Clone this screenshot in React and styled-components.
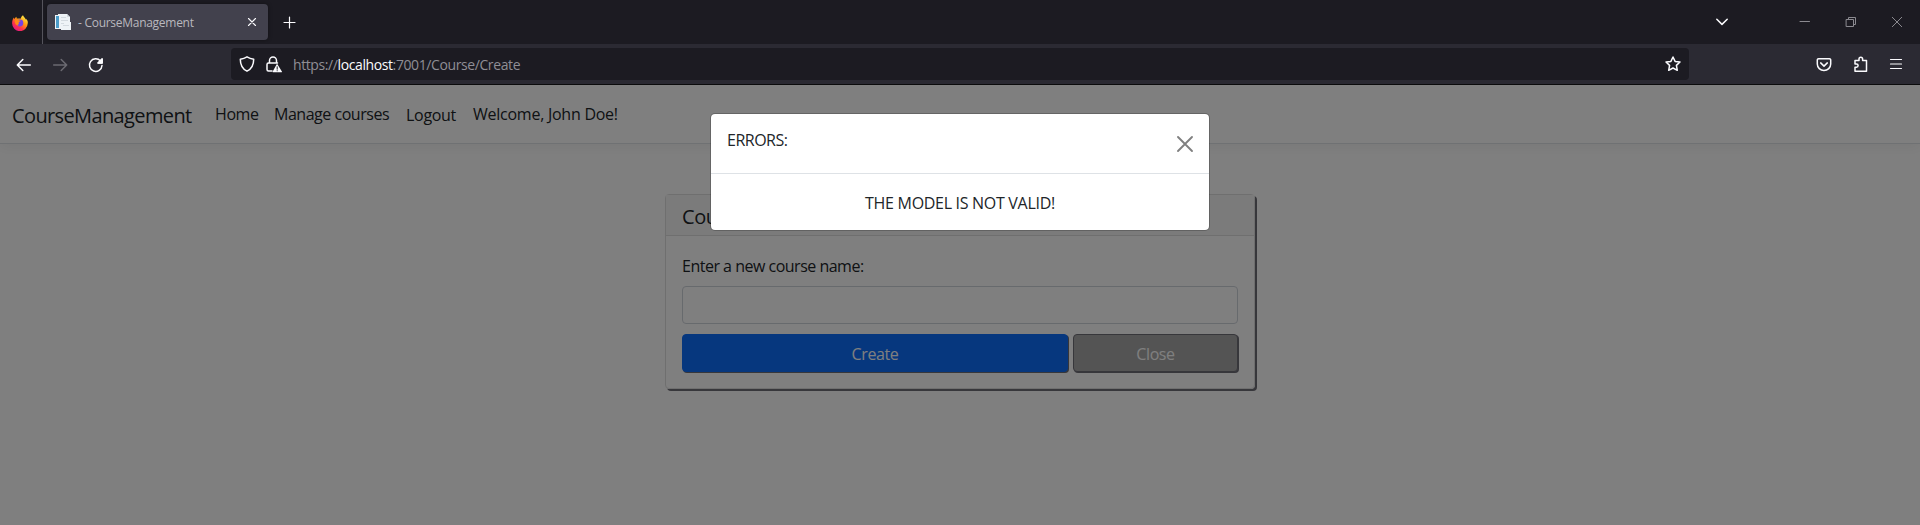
import React from "react";
import styled, { createGlobalStyle } from "styled-components";

const Global = createGlobalStyle`
  * { box-sizing: border-box; }
  body { margin: 0; background: #fff; font-family: "Open Sans", "Noto Sans", sans-serif; overflow: hidden; }
  button { font: inherit; padding: 0; border: 0; background: none; cursor: pointer; }
`;

const Window = styled.div`
  display: flex; flex-direction: column; width: 100%; height: 525px; background: #fff;
`;

const TabStrip = styled.div`
  flex: none; height: 44px; display: flex; align-items: center; background: #1c1b22; color: #fbfbfe;
`;
const FirefoxView = styled.div`
  width: 43px; height: 44px; padding: 14px 0 0 12px; border-right: 1px solid #55545c;
`;
const Tab = styled.div`
  width: 221px; height: 36px; margin-left: 4px; padding: 0 10px 0 8px;
  display: flex; align-items: center; border-radius: 4px; background: #42414d;
  box-shadow: 0 0 4px rgba(0, 0, 0, 0.4);
`;
const TabTitle = styled.span`
  flex: 1; margin: 1px 0 0 7px; font-size: 12px; letter-spacing: -0.28px; color: #b9b8be; white-space: pre;
`;
const Icon = styled.svg`
  display: block; flex: none; fill: none; stroke: ${(p) => p.$color || "#fbfbfe"};
  stroke-width: ${(p) => p.$weight || 1.5}; stroke-linecap: round; stroke-linejoin: round;
  margin-left: ${(p) => p.$gap || 0}px; overflow: visible;
`;
const WindowControls = styled.div`
  margin-left: auto; padding-right: 18px; display: flex; align-items: center;
`;

const Toolbar = styled.div`
  flex: none; height: 41px; padding: 0 15px 0 16px; display: flex; align-items: center;
  background: #2b2a33; border-bottom: 1px solid #0c0c0d;
`;
const Navigation = styled.div`
  display: flex; padding-top: 1px;
`;
const UrlBar = styled.div`
  width: 1458px; height: 32px; margin-left: 127px; padding: 0 8px; display: flex; align-items: center;
  border-radius: 4px; background: #1c1b22;
`;
const Url = styled.span`
  flex: 1; margin-left: 11px; padding-top: 2px; font-size: 14px; line-height: 20px; letter-spacing: -0.4px; color: #8f8e95;
  b { font-weight: 400; color: #fbfbfe; }
`;

const Page = styled.main`
  position: relative; flex: 1; color: #212529; font-size: 16px; line-height: 24px;
`;
const Navbar = styled.nav`
  height: 59px; padding: 8px 12px 0; display: flex; align-items: flex-start; background: #fff;
  border-bottom: 1px solid #dee2e6; box-shadow: 0 4px 12px rgba(0, 0, 0, 0.05);
`;
const Brand = styled.a`
  width: 203px; padding-top: 8px; font-size: 20px; line-height: 30px; letter-spacing: ${(p) => p.$track}px; white-space: nowrap;
`;
const NavItem = styled.a`
  width: ${(p) => p.$width}px; padding-top: ${(p) => p.$top || 9}px; letter-spacing: ${(p) => p.$track}px; white-space: nowrap;
`;

const Card = styled.section`
  width: 590px; height: 195px; margin: 50px 0 0 665px; border: 1px solid #dfdfdf; border-radius: 4px;
  box-shadow: 2px 2px #6f6e77;
`;
const CardHeader = styled.header`
  height: 41px; padding: 10px 16px 0; background: #f7f7f7; border-bottom: 1px solid #dfdfdf;
  font-size: 20px; letter-spacing: -0.4px;
`;
const CardBody = styled.form`
  padding: 18px 16px 0; display: flex; flex-direction: column;
`;
const Label = styled.label`
  letter-spacing: ${(p) => p.$track}px;
`;
const Field = styled.input`
  width: 100%; height: 38px; margin: 8px 0 10px; border: 1px solid #ced4da; border-radius: 4px; background: #fff;
`;
const Actions = styled.div`
  display: flex; gap: 5px;
`;
const Action = styled.button`
  && {
    width: ${(p) => p.$width}px; height: 38px; padding-top: 2px; border-radius: 4px; color: #fff; letter-spacing: -0.4px;
    background: ${(p) => p.$fill}; border: 1px solid ${(p) => p.$edge}; box-shadow: 1px 1px #6f6e77;
  }
`;

const Backdrop = styled.div`
  position: absolute; inset: 0; background: rgba(0, 0, 0, 0.5);
`;
const Dialog = styled.div`
  width: 500px; height: 118px; margin: 28px auto 0; background: #fff; background-clip: padding-box;
  border: 1px solid rgba(0, 0, 0, 0.2); border-radius: 5px;
`;
const DialogHeader = styled.header`
  height: 60px; padding: 14px 16px 0; display: flex; justify-content: space-between; border-bottom: 1px solid #dee2e6;
  letter-spacing: ${(p) => p.$track}px;
`;
const DialogClose = styled.button`
  width: 16px; height: 16px; margin-top: 8px;
`;
const DialogBody = styled.div`
  padding-top: 17px; text-align: center; letter-spacing: ${(p) => p.$track}px;
`;

function FirefoxLogo() {
  return (
    <svg width="16" height="16" viewBox="0 0 16 16">
      <defs>
        <linearGradient id="flame" x1="0.85" y1="0.05" x2="0.2" y2="0.95">
          <stop offset="0" stopColor="#fff44f" />
          <stop offset="0.4" stopColor="#ff980e" />
          <stop offset="0.7" stopColor="#ff3647" />
          <stop offset="1" stopColor="#e31587" />
        </linearGradient>
      </defs>
      <path fill="url(#flame)" d="M15.6 6c-.4-1-1.2-1.900-1.700-2.200.2.600.400 1.100.400 1.500C13.500 3.300 12 2.300 11 .2c-1.400.8-2 2-2.100 3.200L4.800 3.500C4.500 3 4.500 2.200 4.500 1.700c-.900.500-1.700 1.400-2.200 2.200-.4-.1-.3-1-.3-1.500C.8 3.700.1 5.700.1 8.200a7.800 7.800 0 0 0 15.600.3c.2-1 .100-1.800-.1-2.500z" />
      <circle cx="7.900" cy="8" r="3.400" fill="#7542e5" />
      <path fill="#ff8a16" d="M2.900 4.700c1.500-.7 3-.5 3.800.6l2 .4c-.1.800-1.300 1-1.800 1.300-.4.600-.2 1.200.400 1.500-1.100.3-1.600 1.200-.6 2.100-2.500.1-4.300-2-3.800-5.900z" />
    </svg>
  );
}

function PageIcon() {
  return (
    <svg width="16" height="16" viewBox="0 0 16 16">
      <path fill="#eef3f7" d="M0 1h3V0h9l3 3v5h1v8H6v-1H0z" />
      <path fill="#4b9cc9" d="M1 2h3v12H1z" />
      <path fill="#d3dae0" d="M6 3h5v1H6zM6 6h7v1H6zM6 9h3v1H6zM8 11h6v1H8zM12 0l3 3h-3z" />
    </svg>
  );
}

export default function App() {
  return (
    <Window>
      <Global />
      <TabStrip>
        <FirefoxView><FirefoxLogo /></FirefoxView>
        <Tab>
          <PageIcon />
          <TabTitle>- CourseManagement</TabTitle>
          <Icon width="12" height="12" viewBox="0 0 12 12" $weight={1.1}><path d="M2.500 2.500l7 7M9.500 2.500l-7 7" /></Icon>
        </Tab>
        <Icon width="12" height="12" viewBox="0 0 12 12" $gap={16} $weight={1.2}><path d="M5.500 1v11M0 6.500h11" /></Icon>
        <WindowControls>
          <Icon width="12" height="8" viewBox="0 0 12 8"><path d="M.8 1.200L6 6.400l5.200-5.200" /></Icon>
          <Icon width="10" height="10" viewBox="0 0 10 10" $gap={72} $weight={1} $color="#8b8a90"><path d="M0 4.500h9.500" /></Icon>
          <Icon width="10" height="10" viewBox="0 0 10 10" $gap={36} $weight={1} $color="#8b8a90"><path d="M.5 2.500h7v7h-7zM2.500 2.500v-2h7v7h-2" /></Icon>
          <Icon width="10" height="10" viewBox="0 0 10 10" $gap={36} $weight={1} $color="#8b8a90"><path d="M.3.300l9.400 9.400M9.700.300L.3 9.700" /></Icon>
        </WindowControls>
      </TabStrip>
      <Toolbar>
        <Navigation>
          <Icon width="16" height="16" viewBox="0 0 16 16"><path d="M14.300 8H1.500M6.800 2.500L1.300 8l5.500 5.500" /></Icon>
          <Icon width="16" height="16" viewBox="0 0 16 16" $gap={20} $color="#6b6a72"><path d="M1.700 8h12.800M9.200 2.500L14.700 8l-5.500 5.500" /></Icon>
          <Icon width="16" height="16" viewBox="0 0 16 16" $gap={20}><path d="M14 8.500A6.300 6.300 0 1 1 12.500 4M14.200 2v4h-4z" /><path fill="#fbfbfe" d="M14 2v4h-4z" /></Icon>
        </Navigation>
        <UrlBar>
          <Icon width="16" height="16" viewBox="0 0 16 16"><path d="M8 .800C6 2 3.700 2.800 1.300 3.200 1.300 9 3 12.700 8 15.200c5-2.500 6.700-6.200 6.700-12C12.300 2.800 10 2 8 .800z" /></Icon>
          <Icon width="16" height="16" viewBox="0 0 16 16" $gap={11}>
            <path d="M3.500 7V4.500a3.500 3.500 0 0 1 7 0V7M6 15H2.500A1.500 1.500 0 0 1 1 13.500v-5A1.500 1.500 0 0 1 2.500 7h9" />
            <path stroke="none" fill="#fbfbfe" d="M11.400 8.200l4.500 7.200c.3.500 0 .8-.5.800H7.200c-.5 0-.8-.4-.5-.8l4-7.200q.4-.5.700 0z" />
            <path stroke="#1c1b22" strokeWidth="1" d="M11.200 10.800v2.400M11.200 14.700v.1" />
          </Icon>
          <Url>https://<b>localhost</b>:7001/Course/Create</Url>
          <Icon width="16" height="16" viewBox="0 0 16 16"><path d="M8 1l2.100 4.400 4.900.6-3.600 3.400.900 4.900L8 12l-4.300 2.300.9-4.900L1 6l4.900-.6z" /></Icon>
        </UrlBar>
        <Icon width="16" height="16" viewBox="0 0 16 16" $gap={127}><path d="M2.500 2.700h11a1.200 1.200 0 0 1 1.200 1.200V8a6.700 6.500 0 0 1-13.400 0V3.900a1.200 1.200 0 0 1 1.200-1.200zM4.700 6.900L8 10.100l3.300-3.200" /></Icon>
        <Icon width="16" height="16" viewBox="0 0 16 16" $gap={21}><path d="M2 15.200v-4h1.500a1.600 1.600 0 0 0 0-3.200H2V4.500h4V3a1.800 1.800 0 0 1 3.600 0v1.500h3.900v10.700z" /></Icon>
        <Icon width="16" height="16" viewBox="0 0 16 16" $gap={19} $weight={1.200}><path d="M2.500 3.500h11M2.500 8h11M2.500 12.500h11" /></Icon>
      </Toolbar>
      <Page>
        <Navbar>
          <Brand $track={-0.62}>CourseManagement</Brand>
          <NavItem $width={59} $track={-0.4}>Home</NavItem>
          <NavItem $width={132} $track={-0.47}>Manage courses</NavItem>
          <NavItem $width={67} $top={10} $track={-0.3}>Logout</NavItem>
          <NavItem $width={150} $track={-0.25}>Welcome, John Doe!</NavItem>
        </Navbar>
        <Card>
          <CardHeader>Course</CardHeader>
          <CardBody>
            <Label $track={-0.5}>Enter a new course name:</Label>
            <Field />
            <Actions>
              <Action type="button" $width={386} $fill="#0d6efd" $edge="#0d6efd">Create</Action>
              <Action type="button" $width={165} $fill="#a9a9a9" $edge="#6f6e77">Close</Action>
            </Actions>
          </CardBody>
        </Card>
        <Backdrop>
          <Dialog>
            <DialogHeader $track={-0.5}>
              ERRORS:
              <DialogClose aria-label="Close">
                <Icon width="16" height="16" viewBox="0 0 16 16" $weight={1.900} $color="#808080"><path d="M1 1l14 14M15 1L1 15" /></Icon>
              </DialogClose>
            </DialogHeader>
            <DialogBody $track={-0.3}>THE MODEL IS NOT VALID!</DialogBody>
          </Dialog>
        </Backdrop>
      </Page>
    </Window>
  );
}
